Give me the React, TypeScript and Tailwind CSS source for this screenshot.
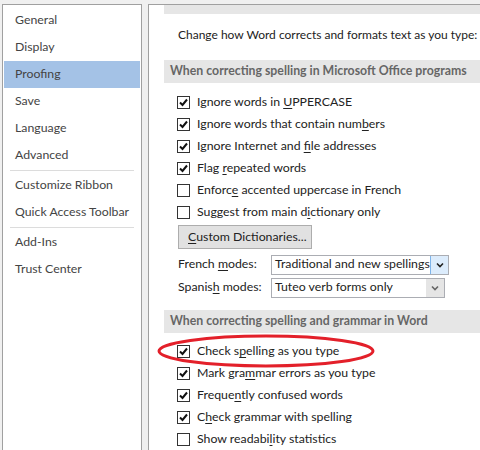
import React from 'react';

const font = { fontFamily: 'Lato, "Open Sans", sans-serif' };

function U({ children }: { children: React.ReactNode }) {
  return <span className="underline underline-offset-2">{children}</span>;
}

function Check({ checked, children }: { checked: boolean; children: React.ReactNode }) {
  return (
    <div className="flex h-[22px] items-center pl-[13px]">
      <div className="flex h-[13px] w-[13px] shrink-0 items-center justify-center border border-[#333] bg-white">
        {checked && (
          <svg width="9" height="9" viewBox="0 0 9 9">
            <path d="M1 4.5 L3.5 7 L8 1.5" fill="none" stroke="#111" strokeWidth="2" />
          </svg>
        )}
      </div>
      <span className="ml-[7px] whitespace-nowrap text-[12.3px] text-[#222]">{children}</span>
    </div>
  );
}

function Header({ children }: { children: React.ReactNode }) {
  return (
    <div className="flex h-[23px] items-center whitespace-nowrap bg-[#e6e6e6] pl-[6px] text-[12.3px] font-bold text-[#666]">
      {children}
    </div>
  );
}

function Select({ value, focused, width }: { value: string; focused?: boolean; width: string }) {
  return (
    <div className={`flex h-[20px] items-stretch border border-[#abadb3] bg-white ${width}`}>
      <span className="flex flex-1 items-center overflow-hidden whitespace-nowrap pl-[3px] text-[12.3px] text-[#222]">{value}</span>
      <span
        className={
          focused
            ? 'flex w-[18px] items-center justify-center border-l border-[#7eb4ea] bg-[#dcecfc]'
            : 'flex w-[18px] items-center justify-center bg-[#e5e5e5]'
        }
      >
        <svg width="8" height="6" viewBox="0 0 8 6">
          <path d="M1 1.5 L4 4.5 L7 1.5" fill="none" stroke={focused ? '#222' : '#666'} strokeWidth="1.6" />
        </svg>
      </span>
    </div>
  );
}

const nav = [
  'General',
  'Display',
  'Proofing',
  'Save',
  'Language',
  'Advanced',
  '-',
  'Customize Ribbon',
  'Quick Access Toolbar',
  '-',
  'Add-Ins',
  'Trust Center',
];

export default function App() {
  return (
    <div className="flex h-[450px] w-[480px] overflow-hidden bg-[#f0f0f0] pl-[2px] pt-[4px]" style={font}>
      <div className="h-[460px] w-[140px] shrink-0 border-l border-r border-t border-[#a0a0a0] bg-white px-[1px] pt-[2px]">
        {nav.map((item, i) =>
          item === '-' ? (
            <div key={i} className="mx-[6px] my-[1px] h-[1px] bg-[#dcdcdc]" />
          ) : (
            <div
              key={i}
              className={`flex h-[27px] items-center whitespace-nowrap pl-[11px] text-[12.3px] text-[#444] ${
                item === 'Proofing' ? 'bg-[#a4c2e6]' : ''
              }`}
            >
              {item}
            </div>
          )
        )}
      </div>
      <div className="relative ml-[6px] h-[460px] flex-1 border-l border-t border-[#a0a0a0] bg-white">
        <div className="ml-[15px] h-[9px] bg-[#e6e6e6]" />
        <div className="ml-[29px] mt-[12px] whitespace-nowrap text-[12px] text-[#222]">Change how Word corrects and formats text as you type:</div>
        <div className="ml-[15px] mt-[16px]">
          <Header>When correcting spelling in Microsoft Office programs</Header>
          <div className="mt-[8px]">
            <Check checked>Ignore words in <U>U</U>PPERCASE</Check>
            <Check checked>Ignore words that contain num<U>b</U>ers</Check>
            <Check checked>Ignore Internet and <U>f</U>ile addresses</Check>
            <Check checked>Flag <U>r</U>epeated words</Check>
            <Check checked={false}>Enforc<U>e</U> accented uppercase in French</Check>
            <Check checked={false}>Suggest from main d<U>i</U>ctionary only</Check>
          </div>
          <div className="ml-[14px] mt-[2px] flex h-[24px] w-[134px] items-center whitespace-nowrap border border-[#adadad] bg-[#e1e1e1] pl-[9px] text-[12.3px] text-[#222]">
            <U>C</U>ustom Dictionaries...
          </div>
          <div className="ml-[14px] mt-[4px] flex h-[23px] items-center">
            <span className="w-[93px] whitespace-nowrap text-[12.3px] text-[#222]">French <U>m</U>odes:</span>
            <Select value="Traditional and new spellings" focused width="w-[178px]" />
          </div>
          <div className="ml-[14px] flex h-[23px] items-center">
            <span className="w-[93px] whitespace-nowrap text-[12.3px] text-[#222]">Spanis<U>h</U> modes:</span>
            <Select value="Tuteo verb forms only" width="w-[174px]" />
          </div>
          <div className="mt-[11px]">
            <Header>When correcting spelling and grammar in Word</Header>
          </div>
          <div className="mt-[7px]">
            <Check checked>Check s<U>p</U>elling as you type</Check>
            <Check checked>Mark gra<U>m</U>mar errors as you type</Check>
            <Check checked>Freque<U>n</U>tly confused words</Check>
            <Check checked>C<U>h</U>eck grammar with spelling</Check>
            <Check checked={false}>Show readabi<U>l</U>ity statistics</Check>
          </div>
        </div>
        <svg className="absolute left-[6px] top-[325px]" width="224" height="44" viewBox="0 0 224 44">
          <ellipse cx="111" cy="21" rx="107" ry="15" fill="none" stroke="#e3202a" strokeWidth="3" />
        </svg>
      </div>
    </div>
  );
}
